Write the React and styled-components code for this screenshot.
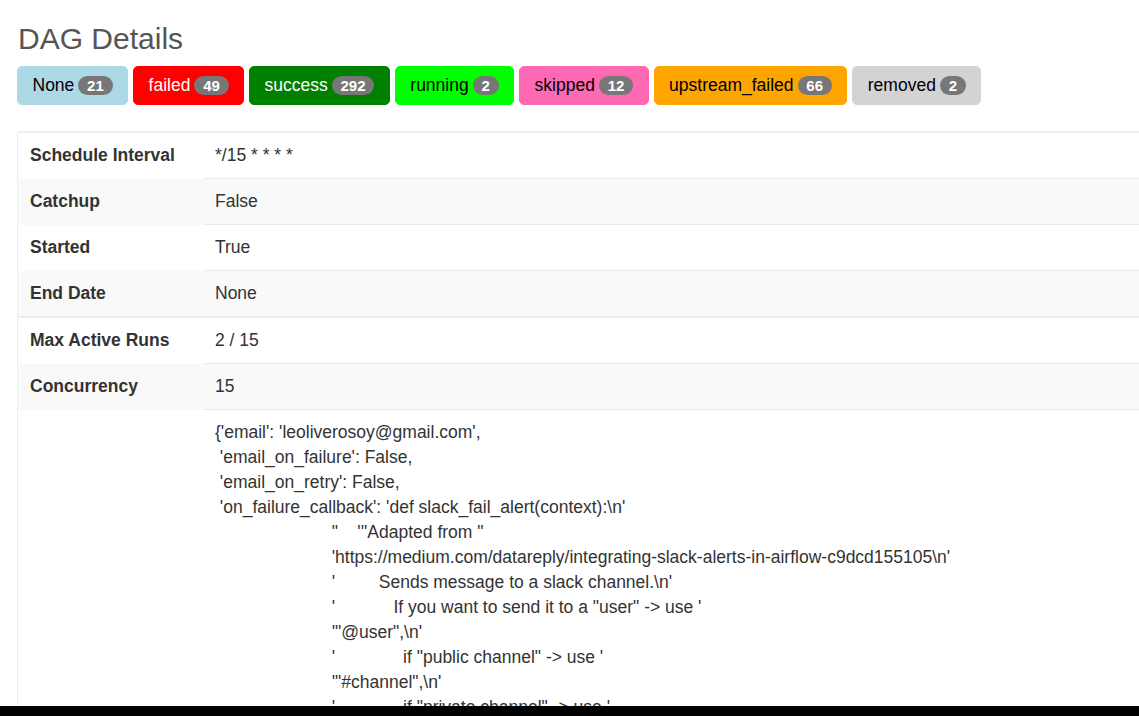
import React from "react";
import styled, { createGlobalStyle } from "styled-components";

const GlobalStyle = createGlobalStyle`
  html, body {
    margin: 0;
    overflow: hidden;
    background: #fff;
  }
  body {
    font-family: "Liberation Sans", Arial, Helvetica, sans-serif;
    font-size: 17.5px;
    line-height: 25px;
    color: #333;
  }
`;

export const Page = styled.div`
  width: 1400px;
  padding-left: 17px;
`;

export const Title = styled.h3`
  margin: 22px 0 11px 1px;
  font-size: 30px;
  font-weight: 500;
  line-height: 33px;
  color: #555;
`;

export const StateBar = styled.div`
  display: flex;
  gap: 5px;
  margin-bottom: 26px;
`;

export const StateButton = styled.a`
  display: inline-flex;
  align-items: center;
  gap: 4px;
  padding: 6px 14.5px;
  border: 1px solid ${(p) => p.$bg};
  border-radius: 5px;
  background: ${(p) => p.$bg};
  color: ${(p) => p.$fg};
  line-height: 25px;
  text-decoration: none;
  cursor: pointer;
`;

export const Count = styled.span`
  display: inline-block;
  padding: 2px 8.75px;
  border-radius: 10px;
  background: #777;
  color: #fff;
  font-size: 15px;
  font-weight: bold;
  line-height: 15px;
`;

export const DetailsTable = styled.table`
  width: 1380px;
  border-collapse: collapse;
  border-top: 2px solid #eee;
  border-left: 1px solid #eee;

  tr:nth-child(even) {
    background: #f9f9f9;
  }
`;

export const Row = styled.tr`
  border-top: ${(p) => (p.$split ? "2px solid #eee" : "none")};
`;

export const Label = styled.th`
  width: 162px;
  padding: 10px 12px;
  text-align: left;
  vertical-align: top;
  font-weight: bold;
  color: #333;
`;

export const Value = styled.td`
  padding: 10px 11px;
  vertical-align: top;
  border-top: ${(p) => (p.$first ? "none" : "1px solid #e9e9e9")};
  white-space: pre;
`;

export const BottomBar = styled.div`
  position: fixed;
  left: 0;
  right: 0;
  bottom: 0;
  height: 10px;
  background: #000;
`;

const states = [
  { name: "None", count: 21, bg: "#add8e6", fg: "#000" },
  { name: "failed", count: 49, bg: "#ff0000", fg: "#fff" },
  { name: "success", count: 292, bg: "#008000", fg: "#fff" },
  { name: "running", count: 2, bg: "#00ff00", fg: "#000" },
  { name: "skipped", count: 12, bg: "#ff69b4", fg: "#000" },
  { name: "upstream_failed", count: 66, bg: "#ffa500", fg: "#000" },
  { name: "removed", count: 2, bg: "#d3d3d3", fg: "#000" },
];

const details = [
  ["Schedule Interval", "*/15 * * * *"],
  ["Catchup", "False"],
  ["Started", "True"],
  ["End Date", "None"],
  ["Max Active Runs", "2 / 15"],
  ["Concurrency", "15"],
];

const pad = " ".repeat(24);

const defaultArgs = [
  "{'email': 'leoliverosoy@gmail.com',",
  " 'email_on_failure': False,",
  " 'email_on_retry': False,",
  " 'on_failure_callback': 'def slack_fail_alert(context):\\n'",
  pad + "\"    '''Adapted from \"",
  pad + "'https://medium.com/datareply/integrating-slack-alerts-in-airflow-c9dcd155105\\n'",
  pad + "'         Sends message to a slack channel.\\n'",
  pad + "'            If you want to send it to a \"user\" -> use '",
  pad + "'\"@user\",\\n'",
  pad + "'              if \"public channel\" -> use '",
  pad + "'\"#channel\",\\n'",
  pad + "'              if \"private channel\" -> use '",
  pad + "'\"@private-channel\",\\n'",
].join("\n");

export default function App() {
  return (
    <>
      <GlobalStyle />
      <Page>
        <Title>DAG Details</Title>
        <StateBar>
          {states.map((s) => (
            <StateButton key={s.name} $bg={s.bg} $fg={s.fg}>
              {s.name}
              <Count>{s.count}</Count>
            </StateButton>
          ))}
        </StateBar>
        <DetailsTable>
          <tbody>
            {details.map(([label, value], i) => (
              <Row key={label} $split={i === 4}>
                <Label>{label}</Label>
                <Value $first={i === 0}>{value}</Value>
              </Row>
            ))}
            <Row>
              <Label></Label>
              <Value>{defaultArgs}</Value>
            </Row>
          </tbody>
        </DetailsTable>
      </Page>
      <BottomBar />
    </>
  );
}
